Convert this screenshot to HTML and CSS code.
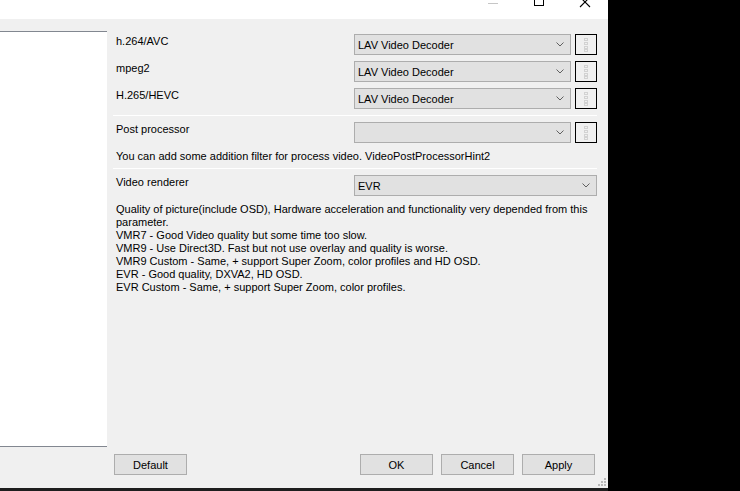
FILE: index.html
```html
<!DOCTYPE html>
<html lang="en">
<head>
    <meta charset="UTF-8">
    <title>Video Options</title>
    <link rel="stylesheet" href="styles.css">
</head>
<body>

<div class="window">

    <!-- Titelleiste mit den Fensterknöpfen -->
    <div class="titlebar">
        <span class="caption-btn">
            <svg width="46" height="19" viewBox="0 0 46 19"><line x1="18" y1="3.5" x2="28" y2="3.5" stroke="#c6c6c6" stroke-width="1"/></svg>
        </span>
        <span class="caption-btn">
            <svg width="46" height="19" viewBox="0 0 46 19"><rect x="18.5" y="-3.5" width="9" height="9" fill="none" stroke="#000" stroke-width="1"/></svg>
        </span>
        <span class="caption-btn">
            <svg width="46" height="19" viewBox="0 0 46 19"><path d="M18 -3 L28 7 M28 -3 L18 7" stroke="#000" stroke-width="1.1" fill="none"/></svg>
        </span>
    </div>

    <div class="client">
        <div class="main">
            <!-- Baumansicht links (leer) -->
            <div class="tree"></div>

            <div class="page">
                <div class="row">
                    <div class="label">h.264/AVC</div>
                    <div class="combo"><span>LAV Video Decoder</span><svg class="chevron" width="8" height="5" viewBox="0 0 8 5"><polyline points="0.5,0.5 4,4 7.5,0.5" fill="none" stroke="#606060"/></svg></div>
                    <div class="dots-btn"><svg width="6" height="14" viewBox="0 0 6 14"><rect x="1.5" y="0.5" width="3" height="2" fill="none" stroke="#d2d2d2"/><rect x="1.5" y="4.5" width="3" height="2" fill="none" stroke="#d2d2d2"/><rect x="1.5" y="8.5" width="3" height="2" fill="none" stroke="#d2d2d2"/><rect x="1.5" y="11.5" width="3" height="2" fill="none" stroke="#d2d2d2"/></svg></div>
                </div>
                <div class="row">
                    <div class="label">mpeg2</div>
                    <div class="combo"><span>LAV Video Decoder</span><svg class="chevron" width="8" height="5" viewBox="0 0 8 5"><polyline points="0.5,0.5 4,4 7.5,0.5" fill="none" stroke="#606060"/></svg></div>
                    <div class="dots-btn"><svg width="6" height="14" viewBox="0 0 6 14"><rect x="1.5" y="0.5" width="3" height="2" fill="none" stroke="#d2d2d2"/><rect x="1.5" y="4.5" width="3" height="2" fill="none" stroke="#d2d2d2"/><rect x="1.5" y="8.5" width="3" height="2" fill="none" stroke="#d2d2d2"/><rect x="1.5" y="11.5" width="3" height="2" fill="none" stroke="#d2d2d2"/></svg></div>
                </div>
                <div class="row">
                    <div class="label">H.265/HEVC</div>
                    <div class="combo"><span>LAV Video Decoder</span><svg class="chevron" width="8" height="5" viewBox="0 0 8 5"><polyline points="0.5,0.5 4,4 7.5,0.5" fill="none" stroke="#606060"/></svg></div>
                    <div class="dots-btn"><svg width="6" height="14" viewBox="0 0 6 14"><rect x="1.5" y="0.5" width="3" height="2" fill="none" stroke="#d2d2d2"/><rect x="1.5" y="4.5" width="3" height="2" fill="none" stroke="#d2d2d2"/><rect x="1.5" y="8.5" width="3" height="2" fill="none" stroke="#d2d2d2"/><rect x="1.5" y="11.5" width="3" height="2" fill="none" stroke="#d2d2d2"/></svg></div>
                </div>

                <div class="separator"></div>

                <div class="row">
                    <div class="label">Post processor</div>
                    <div class="combo"><span></span><svg class="chevron" width="8" height="5" viewBox="0 0 8 5"><polyline points="0.5,0.5 4,4 7.5,0.5" fill="none" stroke="#606060"/></svg></div>
                    <div class="dots-btn"><svg width="6" height="14" viewBox="0 0 6 14"><rect x="1.5" y="0.5" width="3" height="2" fill="none" stroke="#d2d2d2"/><rect x="1.5" y="4.5" width="3" height="2" fill="none" stroke="#d2d2d2"/><rect x="1.5" y="8.5" width="3" height="2" fill="none" stroke="#d2d2d2"/><rect x="1.5" y="11.5" width="3" height="2" fill="none" stroke="#d2d2d2"/></svg></div>
                </div>
                <div class="hint">You can add some addition filter for process video. VideoPostProcessorHint2</div>

                <div class="separator sep-2"></div>

                <div class="row row-wide">
                    <div class="label">Video renderer</div>
                    <div class="combo"><span>EVR</span><svg class="chevron" width="8" height="5" viewBox="0 0 8 5"><polyline points="0.5,0.5 4,4 7.5,0.5" fill="none" stroke="#606060"/></svg></div>
                </div>

                <div class="description">
                    Quality of picture(include OSD), Hardware acceleration and functionality very depended from this<br>
                    parameter.<br>
                    VMR7 - Good Video quality but some time too slow.<br>
                    VMR9 - Use Direct3D. Fast but not use overlay and quality is worse.<br>
                    VMR9 Custom - Same, + support Super Zoom, color profiles and HD OSD.<br>
                    EVR - Good quality, DXVA2, HD OSD.<br>
                    EVR Custom - Same, + support Super Zoom, color profiles.
                </div>
            </div>
        </div>

        <!-- Knopfleiste unten -->
        <div class="footer">
            <button class="btn">Default</button>
            <div class="footer-right">
                <button class="btn">OK</button>
                <button class="btn">Cancel</button>
                <button class="btn">Apply</button>
            </div>
        </div>

        <svg class="grip" width="9" height="9" viewBox="0 0 9 9">
            <rect x="6" y="0" width="2" height="2" fill="#b9b9b9"/>
            <rect x="3" y="3" width="2" height="2" fill="#b9b9b9"/>
            <rect x="6" y="3" width="2" height="2" fill="#b9b9b9"/>
            <rect x="0" y="6" width="2" height="2" fill="#b9b9b9"/>
            <rect x="3" y="6" width="2" height="2" fill="#b9b9b9"/>
            <rect x="6" y="6" width="2" height="2" fill="#b9b9b9"/>
        </svg>
    </div>
</div>

<!-- dunkler Streifen unter dem Fenster -->
<div class="strip"></div>

</body>
</html>
```

FILE: styles.css
```css
body {
    margin: 0;
    background-color: #000;
    font-family: "Liberation Sans", Arial, sans-serif;
    font-size: 11px;
    color: #000;
}

.window {
    width: 608px;
    height: 488px;
    background-color: #f0f0f0;
    display: flex;
    flex-direction: column;
}

.titlebar {
    height: 19px;
    background-color: #fff;
    display: flex;
    justify-content: flex-end;
}

.caption-btn {
    width: 46px;
    height: 19px;
}

.caption-btn svg {
    display: block;
    overflow: hidden;
}

.client {
    flex: 1;
    display: flex;
    flex-direction: column;
    position: relative;
}

.main {
    display: flex;
    height: 428px;
}

.tree {
    flex-shrink: 0;
    width: 107px;
    height: 414px;
    margin-top: 12px;
    background-color: #fff;
    border-top: 1px solid #828790;
    border-bottom: 1px solid #828790;
}

/* Spalte mit den Einstellungen, als Flex-Spalte damit Abstände nicht zusammenfallen */
.page {
    flex: 1;
    min-width: 0;
    display: flex;
    flex-direction: column;
    padding: 15px 11px 0 6px;
    white-space: nowrap;
}

.row {
    display: grid;
    grid-template-columns: 237px 217px 22px;
    column-gap: 4px;
    height: 21px;
    margin-bottom: 6px;
}

.row-wide {
    grid-template-columns: 237px 243px;
}

.label {
    padding-left: 3px;
    line-height: 13px;
    padding-top: 1px;
}

.combo {
    box-sizing: border-box;
    height: 21px;
    border: 1px solid #adadad;
    background-color: #e1e1e1;
    display: flex;
    align-items: center;
    justify-content: space-between;
    padding: 0 6px 0 3px;
}

.combo span {
    line-height: 13px;
    padding-top: 1px;
}

.chevron {
    display: block;
}

.dots-btn {
    box-sizing: border-box;
    height: 21px;
    border: 1px solid #000;
    background-color: #f0f0f0;
    display: flex;
    align-items: center;
    justify-content: center;
}

.dots-btn svg {
    display: block;
}

.separator {
    height: 1px;
    flex-shrink: 0;
    background-color: #fff;
    margin-bottom: 6px;
}

.hint {
    line-height: 13px;
    padding-left: 3px;
    margin-top: 1px;
}

.sep-2 {
    margin-top: 5px;
}

.description {
    line-height: 13px;
    padding-left: 3px;
    margin-top: 1px;
}

.footer {
    display: flex;
    justify-content: space-between;
    margin-top: 7px;
    padding-left: 114px;
    padding-right: 13px;
}

.footer-right {
    display: flex;
    gap: 8px;
}

.btn {
    box-sizing: border-box;
    width: 73px;
    height: 21px;
    margin: 0;
    padding: 0;
    border: 1px solid #adadad;
    background-color: #e1e1e1;
    font-family: "Liberation Sans", Arial, sans-serif;
    font-size: 11px;
    color: #000;
}

/* Größenänderungs-Griff in der Ecke */
.grip {
    position: absolute;
    right: 1px;
    bottom: 1px;
}

.strip {
    width: 608px;
    height: 3px;
    background-color: #1e1e1e;
}
```
